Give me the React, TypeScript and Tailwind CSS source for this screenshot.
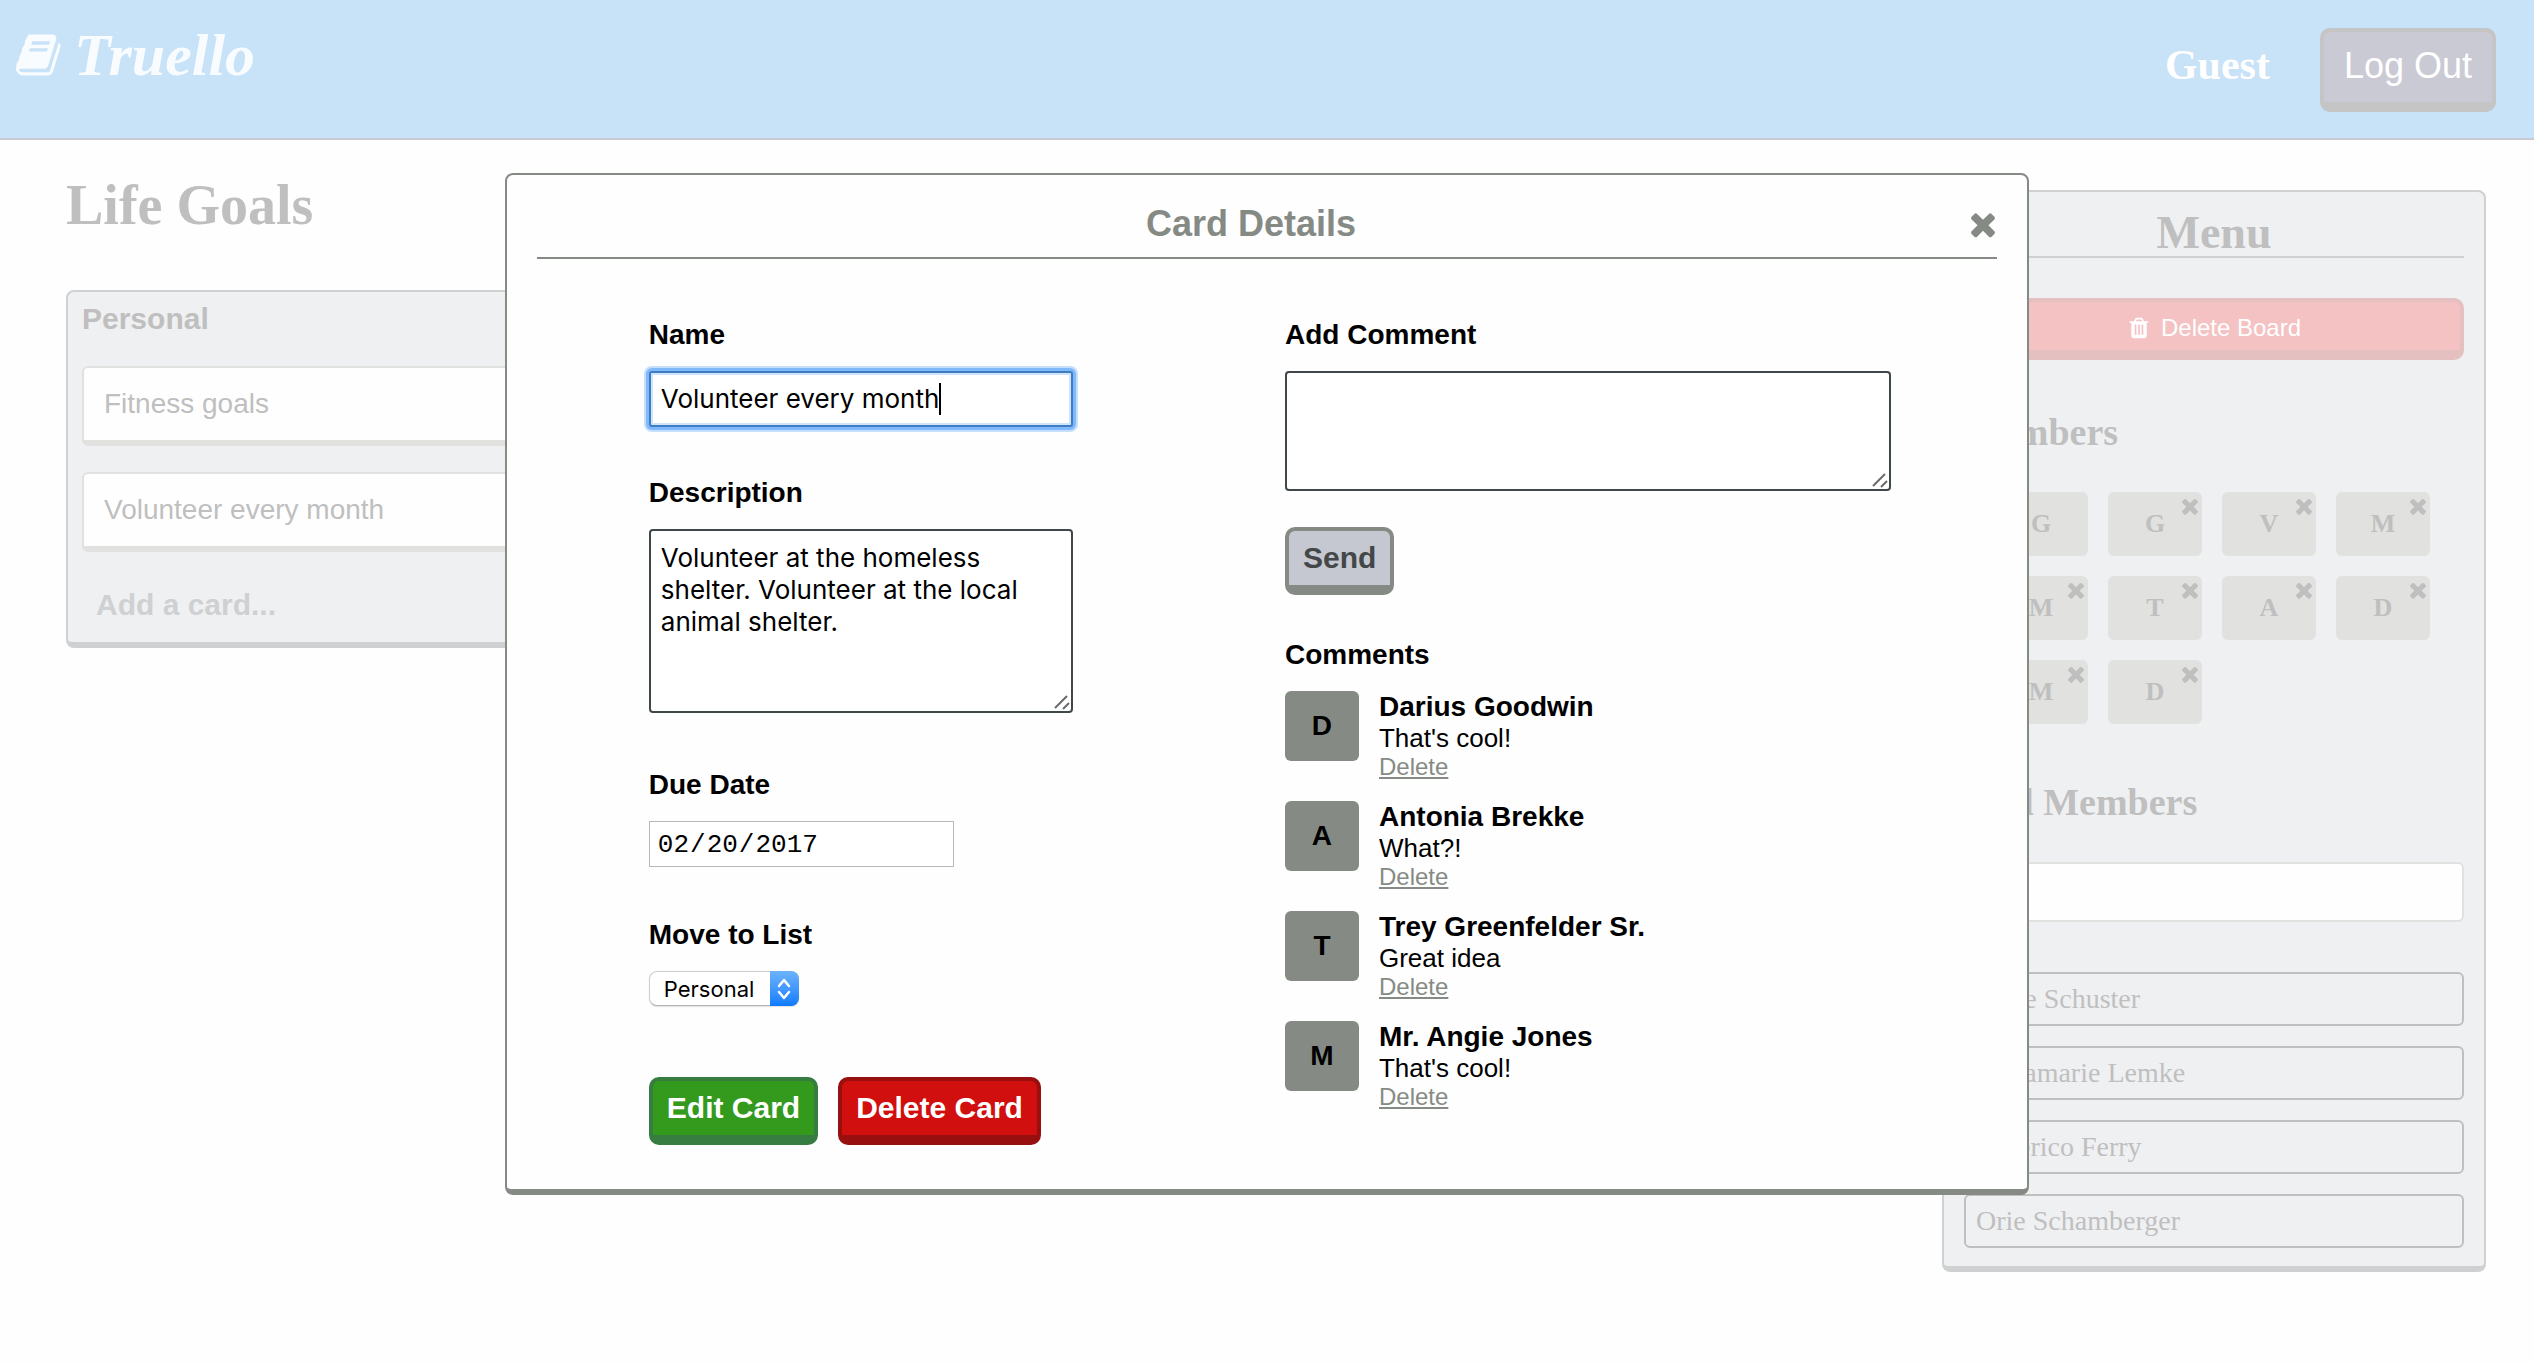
import React from "react";

const SANS = "font-['Liberation_Sans',Arial,sans-serif]";
const SERIF = "font-[Georgia,'Liberation_Serif',serif]";
const FIELD = "font-[Inter,'Liberation_Sans',sans-serif]";

type IconProps = { className?: string };

function BookIcon({ className }: IconProps) {
  return (
    <svg viewBox="0 0 1792 1792" fill="currentColor" className={className} aria-hidden="true">
      <path d="M1639 478q40 57 18 129l-275 906q-19 64-76.5 107.5t-122.5 43.5h-923q-77 0-148.5-53.5t-99.5-131.5q-24-67-2-127 0-4 3-27t4-37q1-8-3-21.5t-3-19.5q2-11 8-21t16.5-23.5 16.5-23.5q23-38 45-91.5t30-91.5q3-10 .5-30t-.5-28q3-11 17-28t17-23q21-36 42-92t25-90q1-9-2.5-32t.5-28q4-13 22-30.5t22-22.5q19-26 42.5-84.5t27.5-96.5q1-8-3-25.5t-2-26.5q2-8 9-18t18-23 17-21q8-12 16.5-30.5t15-35 16-36 19.5-32 26.5-23.5 36-11.5 47.5 5.5l-1 3q38-9 51-9h761q74 0 114 56t18 130l-274 906q-36 119-71.5 153.5t-128.5 34.5h-869q-27 0-38 15-11 16-1 43 24 70 144 70h923q29 0 56-15.5t35-41.5l300-987q7-22 5-57 38 15 59 43zm-1064 2q-4 13 2 22.5t20 9.5h608q13 0 25.5-9.5t16.5-22.5l21-64q4-13-2-22.5t-20-9.5h-608q-13 0-25.5 9.5t-16.5 22.5zm-83 256q-4 13 2 22.5t20 9.5h608q13 0 25.5-9.5t16.5-22.5l21-64q4-13-2-22.5t-20-9.5h-608q-13 0-25.5 9.5t-16.5 22.5z" />
    </svg>
  );
}

function CloseIcon({ className }: IconProps) {
  return (
    <svg viewBox="0 0 1792 1792" fill="currentColor" className={className} aria-hidden="true">
      <path d="M1490 1322q0 40-28 68l-136 136q-28 28-68 28t-68-28l-294-294-294 294q-28 28-68 28t-68-28l-136-136q-28-28-28-68t28-68l294-294-294-294q-28-28-28-68t28-68l136-136q28-28 68-28t68 28l294 294 294-294q28-28 68-28t68 28l136 136q28 28 28 68t-28 68l-294 294 294 294q28 28 28 68z" />
    </svg>
  );
}

function TrashIcon({ className }: IconProps) {
  return (
    <svg viewBox="0 0 1792 1792" fill="currentColor" className={className} aria-hidden="true">
      <path d="M704 1376v-704q0-14-9-23t-23-9h-64q-14 0-23 9t-9 23v704q0 14 9 23t23 9h64q14 0 23-9t9-23zm256 0v-704q0-14-9-23t-23-9h-64q-14 0-23 9t-9 23v704q0 14 9 23t23 9h64q14 0 23-9t9-23zm256 0v-704q0-14-9-23t-23-9h-64q-14 0-23 9t-9 23v704q0 14 9 23t23 9h64q14 0 23-9t9-23zm-544-992h448l-48-117q-7-9-17-11h-317q-10 2-17 11zm928 32v64q0 14-9 23t-23 9h-96v948q0 83-47 143.5t-113 60.5h-832q-66 0-113-58.5t-47-141.5v-952h-96q-14 0-23-9t-9-23v-64q0-14 9-23t23-9h309l70-167q15-37 54-63t79-26h320q40 0 79 26t54 63l70 167h309q14 0 23 9t9 23z" />
    </svg>
  );
}

function ResizeGrip() {
  return (
    <svg
      viewBox="0 0 16 16"
      className="pointer-events-none absolute right-[3px] bottom-[3px] size-4 text-[#6b6b6b]"
      fill="none"
      stroke="currentColor"
      strokeWidth="2"
      aria-hidden="true"
    >
      <path d="M1 14 L13 2 M9 15 L15 9" />
    </svg>
  );
}

const boardCards = ["Fitness goals", "Volunteer every month"];

const members = ["G", "G", "V", "M", "M", "T", "A", "D", "M", "D"];

const candidates = ["Katie Schuster", "Annamarie Lemke", "Federico Ferry", "Orie Schamberger"];

const comments = [
  { author: "Darius Goodwin", text: "That's cool!" },
  { author: "Antonia Brekke", text: "What?!" },
  { author: "Trey Greenfelder Sr.", text: "Great idea" },
  { author: "Mr. Angie Jones", text: "That's cool!" },
];

function Header() {
  return (
    <header className="flex h-[140px] items-start justify-between border-b-2 border-[#c9c9d3] bg-[#c8e2f7] pt-7 pr-[38px] pl-4">
      <a href="#" className={`flex items-center gap-2.5 text-[#f8fcff] ${SERIF}`}>
        <BookIcon className="size-12" />
        <span className="text-[60px] leading-[54px] font-bold italic">Truello</span>
      </a>
      <div className="flex items-start gap-[50px]">
        <span className={`pt-[13px] text-[42px] leading-[48px] font-bold text-white ${SERIF}`}>Guest</span>
        <button
          type="button"
          className={`rounded-[10px] border-4 border-b-10 border-[#c5c5c5] bg-[#cacad4] px-5 pt-[13px] pb-[15px] text-[36px] leading-[42px] text-white ${SANS}`}
        >
          Log Out
        </button>
      </div>
    </header>
  );
}

function BoardList() {
  return (
    <section
      className={`w-[520px] rounded-lg border-2 border-b-6 border-[#cfd0d1] bg-[#eff0f2] px-3.5 pt-2.5 pb-5 text-[#bfbfbf] ${SANS}`}
    >
      <h2 className="mb-[30px] text-[30px] leading-[34px] font-bold">Personal</h2>
      <ul className="flex flex-col gap-[26px]">
        {boardCards.map((name) => (
          <li
            key={name}
            className="rounded-md border-2 border-b-6 border-[#e1e1df] bg-[#fefefe] px-5 py-5 text-[28px] leading-8"
          >
            {name}
          </li>
        ))}
      </ul>
      <button type="button" className="mt-9 block px-3.5 text-[30px] leading-[34px] font-bold text-[#cfd0d2]">
        Add a card...
      </button>
    </section>
  );
}

function Menu() {
  return (
    <aside
      className={`mt-[50px] mr-12 w-[544px] rounded-lg border-2 border-b-6 border-[#cfd0d1] bg-[#eff0f2] px-5 pt-[18px] pb-[18px] text-[#bfbfbf] ${SERIF}`}
    >
      <h2 className="border-b-2 border-[#cfd0d1] text-center text-[46px] leading-[46px] font-bold">Menu</h2>
      <button
        type="button"
        className={`mt-10 flex w-full items-center justify-center gap-2.5 rounded-[10px] border-4 border-b-10 border-[#e5c0c0] bg-[#f4c2c3] pt-3 pb-2 text-2xl leading-7 text-white ${SANS}`}
      >
        <TrashIcon className="size-6" />
        Delete Board
      </button>
      <h3 className="mt-[52px] text-[38px] leading-10 font-bold">Members</h3>
      <ul className="mt-10 grid grid-cols-[repeat(4,94px)] gap-5 pl-[30px]">
        {members.map((initial, i) => (
          <li
            key={i}
            className="relative flex h-16 items-center justify-center rounded-md bg-[#e1e1df] text-[26px] leading-[30px] font-bold"
          >
            {initial}
            {i > 0 && (
              <button type="button" aria-label="Remove member" className="absolute top-0.5 right-0">
                <CloseIcon className="size-6" />
              </button>
            )}
          </li>
        ))}
      </ul>
      <label htmlFor="add-members" className="mt-[58px] block text-[38px] leading-10 font-bold">
        Add Members
      </label>
      <input
        id="add-members"
        type="text"
        className="mt-10 block h-[60px] w-full rounded-md border-2 border-[#e1e1df] bg-[#fefefe] px-3 text-[28px]"
      />
      <ul className="mt-[50px] flex flex-col gap-5">
        {candidates.map((name) => (
          <li key={name} className="rounded-md border-2 border-[#bdbfc0] px-2.5 py-[9px] text-[28px] leading-8">
            {name}
          </li>
        ))}
      </ul>
    </aside>
  );
}

const labelClass = "mb-5 block text-[28px] leading-8 font-bold";
const pushButton =
  "rounded-[10px] border-4 border-b-10 px-3.5 py-2.5 text-[30px] leading-[34px] font-bold";

function CardForm() {
  return (
    <form className="flex flex-col items-start" onSubmit={(e) => e.preventDefault()}>
      <label htmlFor="card-name" className={labelClass}>
        Name
      </label>
      <div className="flex h-14 w-[70%] items-center rounded-[3px] border-2 border-[#3f7cc0] bg-white pl-2.5 shadow-[inset_0_0_0_2px_#cfe4fb,0_0_0_3px_#7fb8fb,0_0_0_5px_#c5dffc]">
        <input
          id="card-name"
          type="text"
          defaultValue="Volunteer every month"
          className={`field-sizing-content border-r-2 border-black text-[26px] leading-8 outline-none ${FIELD}`}
        />
      </div>

      <label htmlFor="card-description" className={`mt-[50px] ${labelClass}`}>
        Description
      </label>
      <div className="relative w-[70%]">
        <textarea
          id="card-description"
          defaultValue="Volunteer at the homeless shelter. Volunteer at the local animal shelter."
          className={`block h-[184px] w-full resize-none rounded-[4px] border-2 border-[#3f474a] bg-white px-2.5 pt-[11px] text-[26px] leading-8 ${FIELD}`}
        />
        <ResizeGrip />
      </div>

      <label htmlFor="card-due" className={`mt-14 ${labelClass}`}>
        Due Date
      </label>
      <input
        id="card-due"
        type="date"
        defaultValue="2017-02-20"
        className="h-[46px] w-[305px] border border-[#b9b9b9] bg-white px-[7px] pt-0.5 font-['Liberation_Mono',monospace] text-[26px] leading-8 [&::-webkit-calendar-picker-indicator]:hidden"
      />

      <label htmlFor="card-list" className={`mt-[52px] ${labelClass}`}>
        Move to List
      </label>
      <div className="relative">
        <select
          id="card-list"
          className={`block h-[35px] w-[150px] appearance-none rounded-lg border border-[#cdcdcd] border-b-[#b5b5b5] bg-white pl-3.5 text-[22px] leading-8 shadow-[0_1px_1px_rgba(0,0,0,0.12)] ${FIELD}`}
        >
          <option>Personal</option>
        </select>
        <span className="pointer-events-none absolute top-0 right-0 flex h-[35px] w-[29px] items-center justify-center rounded-r-lg bg-linear-to-b from-[#6cb3fa] to-[#087bfe]">
          <svg viewBox="0 0 14 22" className="h-[22px] w-3.5" fill="none" stroke="white" strokeWidth="2.500" strokeLinecap="round" strokeLinejoin="round" aria-hidden="true">
            <path d="M2 8 L7 2 L12 8 M2 14 L7 20 L12 14" />
          </svg>
        </span>
      </div>

      <div className="mt-[71px] flex gap-5 text-white">
        <button type="submit" className={`border-[#377c40] bg-[#339a1e] ${pushButton}`}>
          Edit Card
        </button>
        <button type="button" className={`border-[#980f10] bg-[#d10f0e] ${pushButton}`}>
          Delete Card
        </button>
      </div>
    </form>
  );
}

function CommentPanel() {
  return (
    <div>
      <form className="flex flex-col items-start" onSubmit={(e) => e.preventDefault()}>
        <label htmlFor="new-comment" className={labelClass}>
          Add Comment
        </label>
        <div className="relative w-full">
          <textarea
            id="new-comment"
            className={`block h-[120px] w-full resize-none rounded-[4px] border-2 border-[#3f474a] bg-white px-2.5 pt-[11px] text-[26px] leading-8 ${FIELD}`}
          />
          <ResizeGrip />
        </div>
        <button type="submit" className={`mt-9 border-[#858b84] bg-[#c5c8d0] text-[#43474a] ${pushButton}`}>
          Send
        </button>
      </form>
      <h3 className={`mt-11 ${labelClass}`}>Comments</h3>
      <ul className="flex flex-col gap-5">
        {comments.map(({ author, text }) => (
          <li key={author} className="flex items-start gap-5">
            <span className="flex h-[70px] w-[74px] items-center justify-center rounded-md bg-[#858b84] text-[28px] leading-8 font-bold">
              {author[0]}
            </span>
            <div>
              <h4 className="text-[28px] leading-8 font-bold">{author}</h4>
              <p className="text-[26px] leading-[30px]">{text}</p>
              <a href="#" className="block w-fit text-2xl leading-7 text-[#858b84] underline decoration-2 underline-offset-2">
                Delete
              </a>
            </div>
          </li>
        ))}
      </ul>
    </div>
  );
}

function CardDialog() {
  return (
    <div className="absolute inset-x-0 top-[173px] flex justify-center">
      <section
        role="dialog"
        aria-labelledby="dialog-title"
        className={`box-content w-[60%] rounded-lg border-2 border-b-6 border-[#858b84] bg-[#fefefe] text-black ${SANS}`}
      >
        <header className="mx-[30px] flex items-center border-b-2 border-[#858b84] pt-7 pb-3 text-[#858b84]">
          <h2 id="dialog-title" className="flex-1 text-center text-[36px] leading-[42px] font-bold">
            Card Details
          </h2>
          <button type="button" aria-label="Close" className="-mr-1">
            <CloseIcon className="size-9" />
          </button>
        </header>
        <div className="grid grid-cols-2 gap-[30px] pt-[60px] pr-[136px] pb-11 pl-[142px]">
          <CardForm />
          <CommentPanel />
        </div>
      </section>
    </div>
  );
}

export default function App() {
  return (
    <div className="relative min-h-screen bg-[#fefefe]">
      <Header />
      <div className="flex items-start justify-between">
        <main className="pt-9 pl-[66px]">
          <h1 className={`mb-14 text-[56px] leading-[58px] font-bold text-[#bfbfbf] ${SERIF}`}>Life Goals</h1>
          <BoardList />
        </main>
        <Menu />
      </div>
      <CardDialog />
    </div>
  );
}
